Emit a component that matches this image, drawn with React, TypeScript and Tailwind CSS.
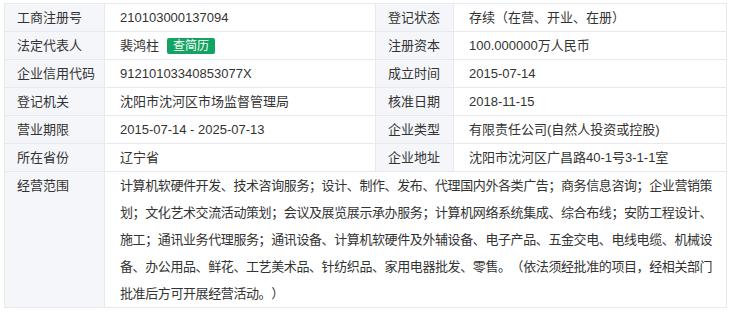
import React from "react";

const font = {
  fontFamily: '"Microsoft YaHei", "Liberation Sans", "Noto Sans CJK SC", sans-serif',
};

function Label({ children, top }: { children: React.ReactNode; top?: boolean }) {
  return (
    <div
      className={
        "bg-[#f5f6fa] border-r border-b border-[#e8e9ee] pl-[12px] text-[13px] text-[#333] " +
        (top ? "leading-[27px]" : "h-[28px] flex items-center")
      }
    >
      {children}
    </div>
  );
}

function Value({ children }: { children: React.ReactNode }) {
  return (
    <div className="bg-white border-r border-b border-[#e8e9ee] pl-[15px] h-[28px] flex items-center text-[13px] text-[#333] whitespace-nowrap">
      {children}
    </div>
  );
}

export default function App() {
  return (
    <div className="w-[730px] h-[313px] bg-white [text-spacing-trim:space-all]" style={font}>
      <div className="ml-[4px] mt-[3px] w-[723px] border-t border-l border-[#e8e9ee] grid grid-cols-[100px_271px_78px_273px]">
        <Label>工商注册号</Label>
        <Value>210103000137094</Value>
        <Label>登记状态</Label>
        <Value>存续（在营、开业、在册）</Value>

        <Label>法定代表人</Label>
        <Value>
          <span>裴鸿柱</span>
          <span className="ml-[8px] bg-[#13a463] text-white text-[12px] leading-[16px] px-[6px] rounded-[2px]">
            查简历
          </span>
        </Value>
        <Label>注册资本</Label>
        <Value>100.000000万人民币</Value>

        <Label>企业信用代码</Label>
        <Value>91210103340853077X</Value>
        <Label>成立时间</Label>
        <Value>2015-07-14</Value>

        <Label>登记机关</Label>
        <Value>沈阳市沈河区市场监督管理局</Value>
        <Label>核准日期</Label>
        <Value>2018-11-15</Value>

        <Label>营业期限</Label>
        <Value>2015-07-14 - 2025-07-13</Value>
        <Label>企业类型</Label>
        <Value>有限责任公司(自然人投资或控股)</Value>

        <Label>所在省份</Label>
        <Value>辽宁省</Value>
        <Label>企业地址</Label>
        <Value>沈阳市沈河区广昌路40-1号3-1-1室</Value>

        <Label top>经营范围</Label>
        <div className="col-span-3 bg-white border-r border-b border-[#e8e9ee] pl-[15px] pr-[8px] text-[13px] leading-[27px] tracking-[-0.4px] text-[#333] whitespace-nowrap">
          计算机软硬件开发、技术咨询服务；设计、制作、发布、代理国内外各类广告；商务信息咨询；企业营销策
          <br />
          划；文化艺术交流活动策划；会议及展览展示承办服务；计算机网络系统集成、综合布线；安防工程设计、
          <br />
          施工；通讯业务代理服务；通讯设备、计算机软硬件及外辅设备、电子产品、五金交电、电线电缆、机械设
          <br />
          备、办公用品、鲜花、工艺美术品、针纺织品、家用电器批发、零售。（依法须经批准的项目，经相关部门
          <br />
          批准后方可开展经营活动。）
        </div>
      </div>
    </div>
  );
}
